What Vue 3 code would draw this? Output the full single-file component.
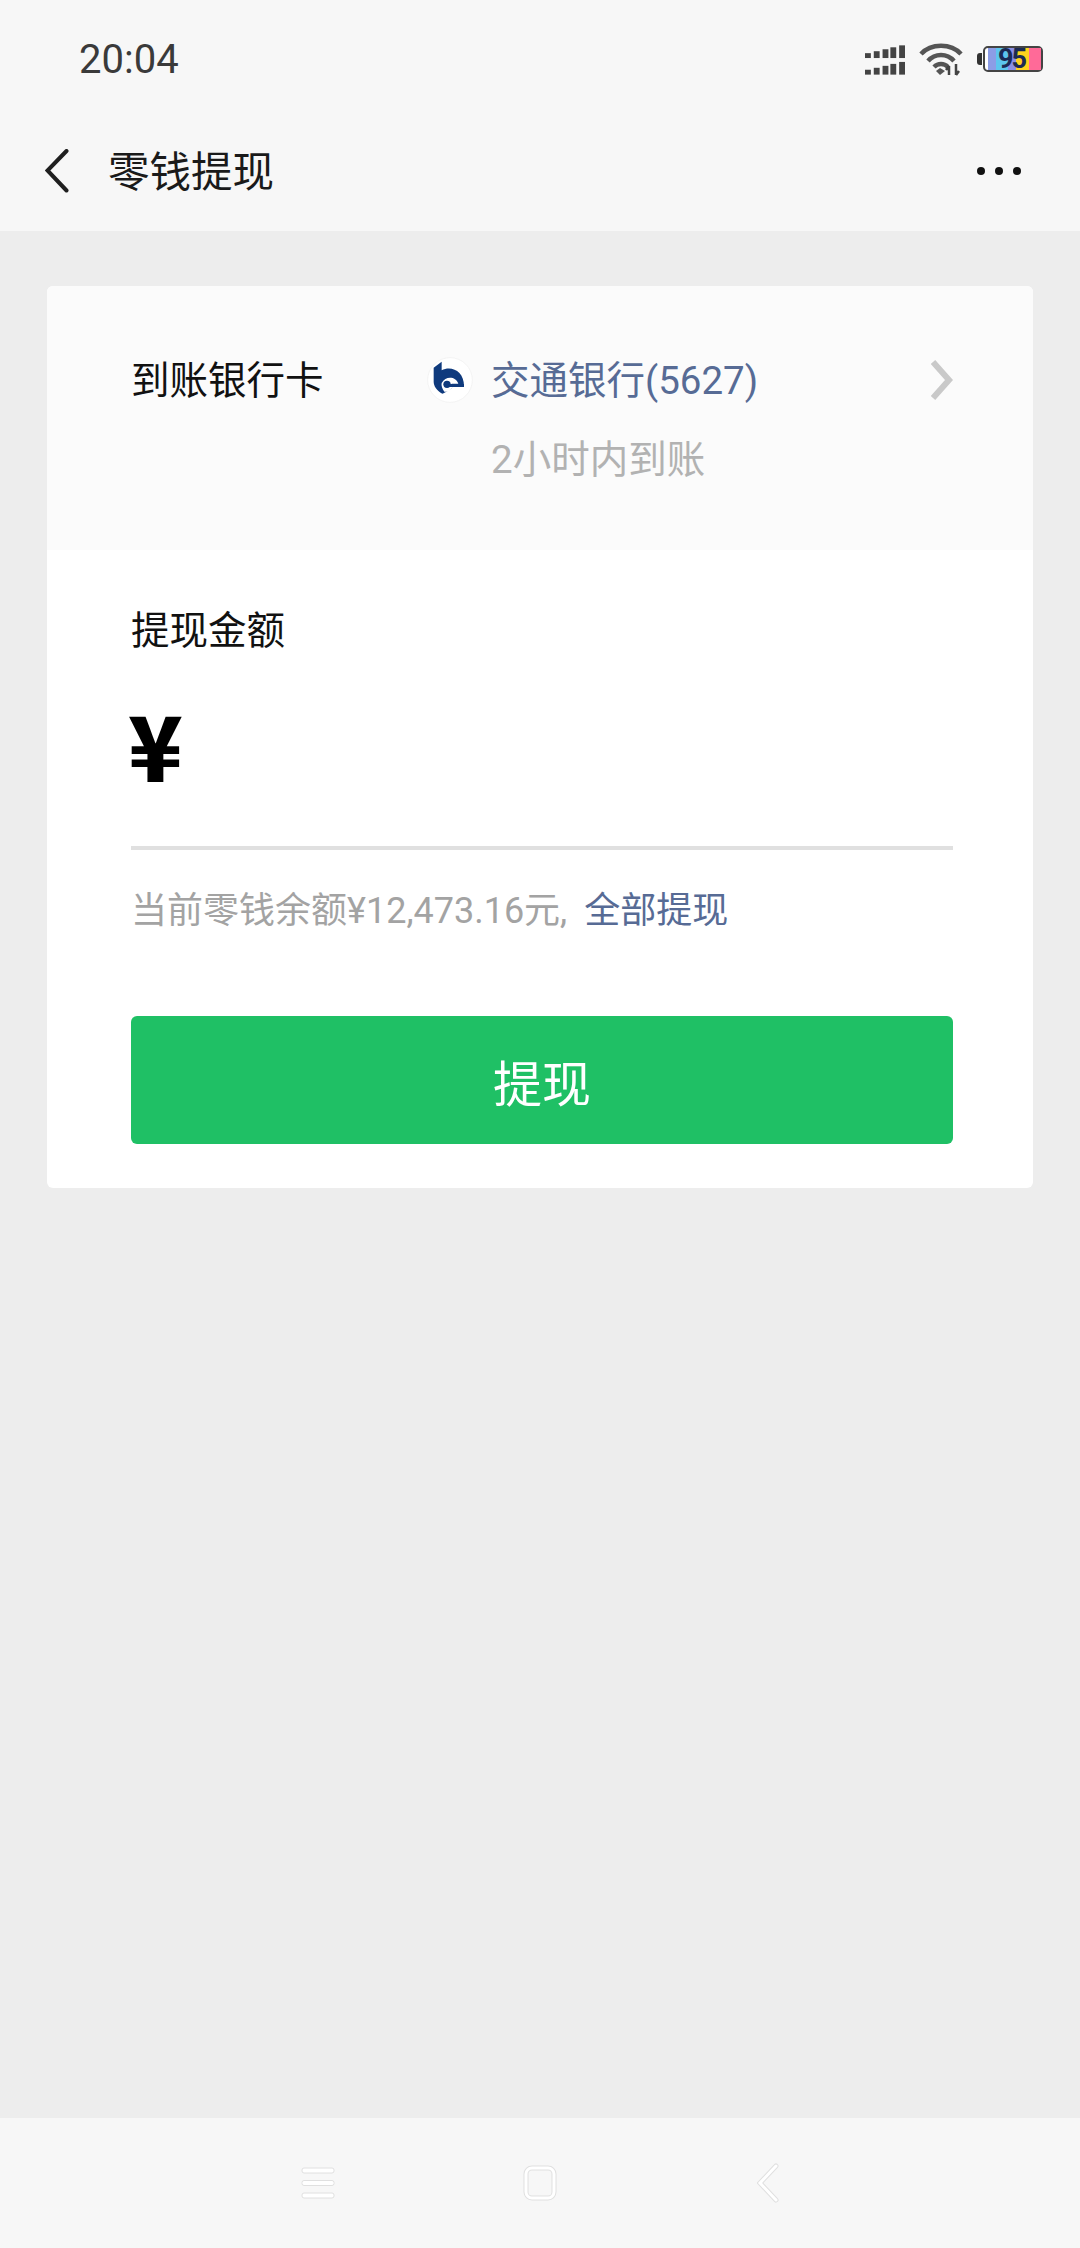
<script setup>
const signalRows = [0, 1]
const bars = [
  { x: 0, h: 5 },
  { x: 9, h: 7 },
  { x: 18, h: 9 },
  { x: 26, h: 11 },
  { x: 35, h: 13 },
]
const stripes = [
  { color: '#8c9de6', width: 8 },
  { color: '#5cc6ee', width: 12 },
  { color: '#8b90e4', width: 8 },
  { color: '#ffd21f', width: 13 },
  { color: '#ff6a98', width: 12 },
]
</script>

<template>
  <div class="page">
    <header class="head">
      <div class="status">
        <span class="time">20:04</span>
        <div class="status-icons">
          <svg class="signal" width="40" height="31" viewBox="0 0 41 31">
            <g v-for="row in signalRows" :key="row" :transform="`translate(0 ${row * 17})`">
              <rect
                v-for="bar in bars"
                :key="bar.x"
                :x="bar.x"
                :y="14 - bar.h"
                width="6"
                :height="bar.h"
                fill="#444"
              />
            </g>
          </svg>
          <svg class="wifi" width="44" height="34" viewBox="0 0 44 34">
            <g fill="none" stroke="#555" stroke-width="4.5">
              <path d="M2 12 C12 1 32 1 42 12" />
              <path d="M9 19 C16 11 28 11 35 19" />
              <path d="M15 25 C19 21 25 21 29 25" />
            </g>
            <path d="M17 29 L21 26 L26 29 L21 33 Z" fill="#555" />
            <path d="M30 33 V24 M30 24 L27 28 M37 22 V33 M37 33 L40 29" stroke="#444" stroke-width="2.5" fill="none" />
          </svg>
          <div class="battery">
            <span class="nub"></span>
            <div class="cell">
              <span
                v-for="s in stripes"
                :key="s.color"
                class="stripe"
                :style="{ background: s.color, width: s.width + 'px' }"
              ></span>
              <span class="level">95</span>
            </div>
          </div>
        </div>
      </div>
      <div class="nav">
        <svg class="back" width="24" height="44" viewBox="0 0 24 44">
          <path d="M21.5 2 L2.5 21.5 L21.5 41.5" fill="none" stroke="#1f1f1f" stroke-width="4" stroke-linecap="round" />
        </svg>
        <h1 class="title">零钱提现</h1>
        <div class="dots"><i></i><i></i><i></i></div>
      </div>
    </header>

    <main class="content">
      <section class="card">
        <div class="bank-row">
          <div class="bank-label">到账银行卡</div>
          <svg class="bank-logo" width="46" height="46" viewBox="6 6 138 138">
            <circle cx="75" cy="75" r="67" fill="#fff" stroke="#eeeeee" stroke-width="2" />
            <path d="M26 38 L50 20 V46 C78 30 118 48 117 94 L82 96 C76 106 62 112 52 116 C34 106 26 92 26 80 Z" fill="#0f3a7d" />
            <path d="M100 86 C92 64 62 62 50 84 C48 92 52 102 58 110 L72 110 L82 97 L80 86 Z" fill="#fff" />
            <circle cx="66" cy="88" r="11" fill="#0f3a7d" />
            <rect x="70" y="87" width="47" height="9" fill="#0f3a7d" />
          </svg>
          <div class="bank-info">
            <div class="bank-name">交通银行(5627)</div>
            <div class="bank-eta">2小时内到账</div>
          </div>
          <svg class="chevron" width="24" height="42" viewBox="0 0 24 42">
            <path d="M4 3 L20 21 L4 39" fill="none" stroke="#c9c9c9" stroke-width="6" />
          </svg>
        </div>

        <div class="form">
          <div class="amount-label">提现金额</div>
          <div class="amount"><span class="yen">¥</span></div>
          <div class="balance">当前零钱余额¥12,473.16元,<a class="all">全部提现</a></div>
          <button class="submit">提现</button>
        </div>
      </section>
    </main>

    <footer class="softkeys">
      <svg width="36" height="34" viewBox="0 0 36 34">
        <g fill="#fff" stroke="#e0e0e0" stroke-width="1">
          <rect x="2" y="2" width="32" height="5" rx="2" />
          <rect x="2" y="14.5" width="32" height="5" rx="2" />
          <rect x="2" y="27" width="32" height="5" rx="2" />
        </g>
      </svg>
      <svg class="key-home" width="36" height="38" viewBox="0 0 36 38">
        <rect x="4" y="4" width="28" height="30" rx="6" fill="none" stroke="#e0e0e0" stroke-width="5" />
        <rect x="4" y="4" width="28" height="30" rx="6" fill="none" stroke="#fff" stroke-width="3" />
      </svg>
      <svg width="22" height="40" viewBox="0 0 22 40">
        <path d="M19 3 L3 20 L19 37" fill="none" stroke="#e0e0e0" stroke-width="5" stroke-linecap="round" />
        <path d="M19 3 L3 20 L19 37" fill="none" stroke="#fff" stroke-width="3" stroke-linecap="round" />
      </svg>
    </footer>
  </div>
</template>

<style scoped>
.page {
  width: 1080px;
  height: 2248px;
  display: flex;
  flex-direction: column;
  background: #ededed;
  font-family: Roboto, "Noto Sans CJK SC", sans-serif;
}
.head {
  background: #f7f7f7;
}
.status {
  height: 118px;
  box-sizing: border-box;
  display: flex;
  align-items: center;
  justify-content: space-between;
  padding: 0 37px 0 79px;
}
.time {
  font-size: 40px;
  color: #3a3a3a;
}
.status-icons {
  display: flex;
  align-items: center;
  gap: 14px;
}
.battery {
  display: flex;
  align-items: center;
  gap: 1px;
}
.nub {
  width: 5px;
  height: 12px;
  background: #333;
  border-radius: 3px 0 0 3px;
}
.cell {
  position: relative;
  width: 60px;
  height: 26px;
  box-sizing: border-box;
  border: 2px solid #444;
  border-radius: 5px;
  padding: 0 0 0 3px;
  display: flex;
  background: #fff;
}
.level {
  position: absolute;
  left: 13px;
  top: -5px;
  font: 700 27px/32px Roboto, sans-serif;
  color: #1c2a55;
  letter-spacing: -2px;
}
.nav {
  height: 113px;
  box-sizing: border-box;
  display: flex;
  align-items: center;
  padding: 0 59px 7px 45px;
}
.title {
  flex: 1;
  margin: 0 0 4px 39px;
  font-size: 41.5px;
  font-weight: 400;
  color: #1a1a1a;
}
.dots {
  display: flex;
  gap: 10px;
}
.dots i {
  width: 8px;
  height: 8px;
  border-radius: 50%;
  background: #111;
}
.content {
  flex: 1;
  padding: 55px 47px 0;
}
.card {
  border-radius: 6px;
  overflow: hidden;
  background: #fff;
}
.bank-row {
  display: flex;
  align-items: flex-start;
  padding: 71px 80px 66px 84px;
  background: #fbfbfb;
}
.bank-label {
  width: 296px;
  font-size: 38.5px;
  line-height: 48px;
  color: #111;
}
.bank-logo {
  margin: 0 18px 0 0;
}
.bank-info {
  flex: 1;
}
.bank-name {
  font-size: 38.5px;
  line-height: 48px;
  color: #576b95;
}
.bank-eta {
  margin-top: 31px;
  font-size: 38.5px;
  line-height: 48px;
  color: #b2b2b2;
}
.chevron {
  margin-top: 2px;
}
.form {
  padding: 57px 80px 44px 84px;
}
.amount-label {
  font-size: 38.5px;
  line-height: 48px;
  color: #111;
}
.amount {
  height: 195px;
  box-sizing: border-box;
  border-bottom: 4px solid #e0e0e0;
  padding-top: 28px;
  font: 900 90px/120px "Noto Sans CJK SC", sans-serif;
  color: #000;
}
.yen {
  display: block;
  margin-left: -3px;
}
.balance {
  margin-top: 36px;
  font-size: 36px;
  line-height: 50px;
  color: #a3a3a3;
}
.all {
  margin-left: 17px;
  color: #576b95;
}
.submit {
  display: block;
  width: 100%;
  height: 128px;
  margin-top: 80px;
  border: 0;
  border-radius: 6px;
  background: #1fc065;
  color: #fff;
  font-family: inherit;
  font-size: 49px;
}
.softkeys {
  height: 130px;
  box-sizing: border-box;
  background: #f7f7f7;
  display: flex;
  align-items: center;
  padding: 0 0 0 300px;
  gap: 186px;
}
.key-home {
  margin-right: 13px;
}
</style>

<style>
html,
body {
  background: #ededed;
}
</style>
